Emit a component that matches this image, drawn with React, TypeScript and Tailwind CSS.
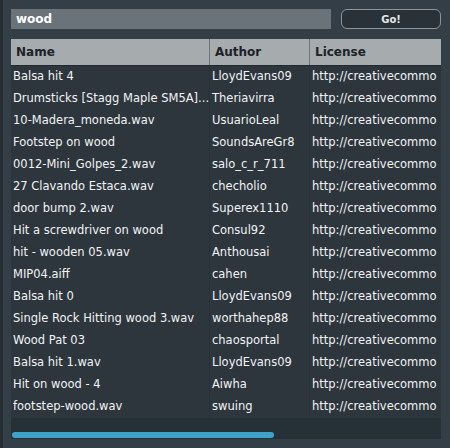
import React from 'react';

const rows: [string, string][] = [
  ['Balsa hit 4', 'LloydEvans09'],
  ['Drumsticks [Stagg Maple SM5A]...', 'Theriavirra'],
  ['10-Madera_moneda.wav', 'UsuarioLeal'],
  ['Footstep on wood', 'SoundsAreGr8'],
  ['0012-Mini_Golpes_2.wav', 'salo_c_r_711'],
  ['27 Clavando Estaca.wav', 'checholio'],
  ['door bump 2.wav', 'Superex1110'],
  ['Hit a screwdriver on wood', 'Consul92'],
  ['hit - wooden 05.wav', 'Anthousai'],
  ['MIP04.aiff', 'cahen'],
  ['Balsa hit 0', 'LloydEvans09'],
  ['Single Rock Hitting wood 3.wav', 'worthahep88'],
  ['Wood Pat 03', 'chaosportal'],
  ['Balsa hit 1.wav', 'LloydEvans09'],
  ['Hit on wood - 4', 'Aiwha'],
  ['footstep-wood.wav', 'swuing'],
];

export default function App() {
  return (
    <div
      className="w-[450px] h-[448px] bg-[#343e46] border-l-[3px] border-[#262e34] flex flex-col pl-[8px] pr-[9px] pt-[9px] overflow-hidden"
      style={{ fontFamily: '"DejaVu Sans", "Liberation Sans", sans-serif' }}
    >
      {/* search bar */}
      <div className="flex items-center h-[20px] gap-[10px]">
        <div className="w-[320px] h-[20px] bg-[#6a737a] flex items-center pl-[5px] text-white text-[12px] font-bold">
          wood
        </div>
        <button className="w-[100px] h-[20px] rounded-[6px] border border-[#8b949a] bg-[#283238] text-[#e6e8ea] text-[10px] font-bold flex items-center justify-center">
          Go!
        </button>
      </div>

      {/* table */}
      <div className="mt-[10px] w-[430px] h-[400px] bg-[#263037] flex flex-col overflow-hidden">
        <div className="flex h-[27px] bg-[#a6abae] border-b border-[#222a30] text-[#1c2226] text-[12px] font-bold shrink-0">
          <div className="w-[199px] border-r border-[#6e767b] flex items-center pl-[5px]">Name</div>
          <div className="w-[100px] border-r border-[#6e767b] flex items-center pl-[5px]">Author</div>
          <div className="flex-1 flex items-center pl-[5px]">License</div>
        </div>
        <div className="bg-[#2d363d] text-[#f2f3f4] text-[11.5px]">
          {rows.map(([name, author], i) => (
            <div key={i} className="flex h-[22px] items-center">
              <div className="w-[199px] h-full border-r border-[#283138] flex items-center pl-[2px] whitespace-nowrap overflow-hidden">
                {name}
              </div>
              <div className="w-[100px] h-full border-r border-[#283138] flex items-center pl-[2px] whitespace-nowrap overflow-hidden">
                {author}
              </div>
              <div className="flex-1 h-full flex items-center pl-[2px] whitespace-nowrap overflow-hidden">
                http://creativecommo
              </div>
            </div>
          ))}
        </div>
        <div className="flex-1 flex items-end pb-[1px] pl-[1px]">
          <div className="w-[262px] h-[6px] rounded-full bg-[#3fa2cd]" />
        </div>
      </div>
    </div>
  );
}
